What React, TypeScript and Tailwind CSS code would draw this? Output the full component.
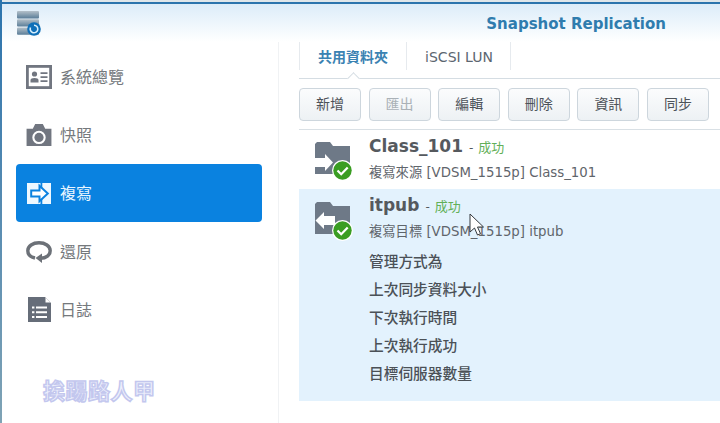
const cjk = "font-['DejaVu_Sans','Noto_Sans_CJK_TC',sans-serif]";

function OverviewIcon({ color }: { color: string }) {
  return (
    <svg width="26" height="24" viewBox="0 0 26 24" fill="none">
      <rect x="1.400" y="1.400" width="23.200" height="21.200" fill="none" stroke={color} strokeWidth="2.800" />
      <circle cx="8.500" cy="9" r="2.600" fill={color} />
      <path d="M4.500 17.500v-2.500c0-1.200 1.500-2 4-2s4 .8 4 2v2.500z" fill={color} />
      <path d="M14.500 8.200h7M14.500 12.200h7M14.500 16.200h7" stroke={color} strokeWidth="1.800" />
    </svg>
  );
}

function CameraIcon({ color }: { color: string }) {
  return (
    <svg width="26" height="22" viewBox="0 0 26 23">
      <path
        fillRule="evenodd"
        d="M0 5h6.500L9 0h8l2.500 5H26v18H0zM13 7a7 7 0 1 0 0 14 7 7 0 0 0 0-14z"
        fill={color}
      />
      <circle cx="13" cy="14" r="4.800" fill={color} />
    </svg>
  );
}

function ReplicateIcon() {
  return (
    <svg width="24" height="21" viewBox="0 0 24 21">
      <path d="M0 0h24v21H0z" fill="#eef8ff" />
      <path d="M13.500 0h1.800v5h-1.800zM13.500 16h1.800v5h-1.800z" fill="#0a82e0" />
      <path d="M4.200 7.400h8.300V2.800L20.800 10.500l-8.300 7.700v-4.600H4.200z" fill="#fff" stroke="#0a82e0" strokeWidth="2" />
    </svg>
  );
}

function RestoreIcon({ color }: { color: string }) {
  return (
    <svg width="26" height="22" viewBox="0 0 26 22" fill="none">
      <path d="M9 17C4.500 16 1.800 13.500 1.800 9.700 1.800 5 6.800 1.800 13 1.800s11.200 3.200 11.200 7.900c0 4.300-4 7.500-9.700 7.500" stroke={color} strokeWidth="3.400" />
      <path d="M16 12.500V22l-6.500-5z" fill={color} />
    </svg>
  );
}

function LogIcon({ color }: { color: string }) {
  return (
    <svg width="23" height="25" viewBox="0 0 23 25">
      <path d="M0 0h17l6 6v19H0z" fill={color} />
      <path d="M17.500 0.500l5 5h-5z" fill="#fff" />
      <path d="M4 9.500h2.400v2H4zM4 14.200h2.400v2H4zM4 18.900h2.400v2H4z" fill="#fff" />
      <path d="M8 9.500h11v2H8zM8 14.200h11v2H8zM8 18.900h11v2H8z" fill="#fff" />
    </svg>
  );
}

function AppLogo() {
  return (
    <svg width="24" height="25" viewBox="0 0 24 25">
      <defs>
        <linearGradient id="disk" x1="0" y1="0" x2="0" y2="1">
          <stop offset="0" stopColor="#b4c0c9" />
          <stop offset="1" stopColor="#5a7d98" />
        </linearGradient>
      </defs>
      <rect x="0" y="0" width="22" height="7.400" rx="1" fill="url(#disk)" />
      <rect x="0" y="8.200" width="22" height="7.400" rx="1" fill="url(#disk)" />
      <rect x="0" y="16.400" width="22" height="7.400" rx="1" fill="url(#disk)" />
      <circle cx="17" cy="18" r="6.800" fill="#0f6fb8" />
      <path d="M13.500 16.500a3.800 3.800 0 1 0 3.500-2.300" fill="none" stroke="#d7eefc" strokeWidth="1.600" />
    </svg>
  );
}

function FolderIcon({ direction, className }: { direction: "in" | "out"; className: string }) {
  return (
    <div className={`relative h-[41px] w-[40px] shrink-0 ${className}`}>
      <svg width="40" height="36" viewBox="0 0 40 36">
        <path d="M4 1h13l3 4h17v28H2V3z" fill="#6e7987" />
        {direction === "in" ? (
          <path d="M1 17h11v-4l8 8.500-8 8.500v-4H1z" fill="#fff" />
        ) : (
          <path d="M22 17H11v-4l-8.500 8.500L11 30v-4h11z" fill="#fff" transform="translate(0 -2)" />
        )}
      </svg>
      <svg className="absolute left-[19px] top-[19px]" width="21" height="21" viewBox="0 0 21 21">
        <circle cx="10.500" cy="10.500" r="10.500" fill="#fff" />
        <circle cx="10.500" cy="10.500" r="9.200" fill="#3a9d23" />
        <path d="M5.500 10.500l3.700 3.700 6.500-6.700" fill="none" stroke="#fff" strokeWidth="2.200" />
      </svg>
    </div>
  );
}

const sideItems = [
  { label: "系統總覽", icon: <OverviewIcon color="#717680" /> },
  { label: "快照", icon: <CameraIcon color="#717680" /> },
  { label: "複寫", icon: <ReplicateIcon />, active: true },
  { label: "還原", icon: <RestoreIcon color="#6c7178" /> },
  { label: "日誌", icon: <LogIcon color="#666d79" /> },
];

const toolbar = [
  { label: "新增" },
  { label: "匯出", disabled: true },
  { label: "編輯" },
  { label: "刪除" },
  { label: "資訊" },
  { label: "同步" },
];

const details = ["管理方式為", "上次同步資料大小", "下次執行時間", "上次執行成功", "目標伺服器數量"];

export default function App() {
  return (
    <div className={`relative flex h-[423px] w-[720px] flex-col overflow-hidden bg-white ${cjk}`}>
      <div className="h-[4px] shrink-0 border-t-2 border-[#dfe6ea] bg-[#2b74ad]" />
      <header className="flex h-[38px] shrink-0 items-start justify-between bg-gradient-to-b from-[#dcecf9] to-white pl-[17px] pr-[54px]">
        <div className="mt-[7px]">
          <AppLogo />
        </div>
        <h1 className="mt-[10px] text-[15px] font-bold leading-[20px] text-[#2f7cae]">Snapshot Replication</h1>
      </header>

      <div className="flex min-h-0 flex-1">
        <aside className="flex w-[279px] shrink-0 flex-col border-r border-[#f0f2f4] pl-[16px] pr-[16px] pt-[6px]">
          {sideItems.map((item) => (
            <div
              key={item.label}
              className={`mb-[0.200px] flex h-[58px] items-center rounded-[4px] pl-[10px] text-[16px] ${
                item.active ? "bg-[#0a82e0] text-[#e8f5ff]" : "text-[#75797d]"
              }`}
            >
              <span className="flex w-[34px] shrink-0">
                <span className="flex w-[26px] justify-center">{item.icon}</span>
              </span>
              <span className="pt-[2px]">{item.label}</span>
            </div>
          ))}
          <div className="mt-[39px] pl-[27px] text-[22px] font-bold leading-[28px] tracking-[0.500px] text-[#eef0fc] [-webkit-text-stroke:1.500px_#c3c7ee]">
            挨踢路人甲
          </div>
        </aside>

        <main className="flex min-w-0 flex-1 flex-col pl-[20px]">
          <nav className="relative flex h-[37px] shrink-0 border-b border-[#d5dde3]">
            <div className="mb-[8px] flex w-[108px] items-center justify-center border-x border-[#e6eaee] pt-[2px] text-[14px] font-bold text-[#3a82b2]">
              共用資料夾
            </div>
            <div className="mb-[8px] flex w-[104px] items-center justify-center border-r border-[#e6eaee] pl-[1px] pt-[2px] text-[14px] text-[#5c6670]">
              iSCSI LUN
            </div>
            <span className="absolute bottom-[-5px] left-[50px] h-[9px] w-[9px] rotate-45 border-l border-t border-[#d5dde3] bg-white" />
          </nav>

          <div className="flex h-[51px] shrink-0 items-center gap-[7.600px] border-b border-[#d9e0e5]">
            {toolbar.map((btn) => (
              <button
                key={btn.label}
                className={`h-[33px] w-[62px] rounded-[4px] border border-[#cdd6dd] bg-gradient-to-b from-[#fbfcfd] to-[#edf1f4] text-[14px] ${
                  btn.disabled ? "text-[#aab1b7]" : "text-[#4d5359]"
                }`}
              >
                {btn.label}
              </button>
            ))}
          </div>

          <div className="flex h-[59px] shrink-0 items-start pl-[14px]">
            <FolderIcon direction="in" className="mt-[11px]" />
            <div className="ml-[16px] mt-[5px]">
              <div className="flex items-baseline text-[#55595e]">
                <span className="text-[17px] font-bold leading-[22px]">Class_101</span>
                <span className="ml-[6px] text-[12px]">-</span>
                <span className="ml-[5px] text-[13px] text-[#62b058]">成功</span>
              </div>
              <p className="mt-[6px] text-[13.300px] leading-[18px] text-[#5f656b]">複寫來源 [VDSM_1515p] Class_101</p>
            </div>
          </div>

          <div className="flex h-[212px] shrink-0 items-start bg-[#e3f2fd] pl-[14px]">
            <FolderIcon direction="out" className="mt-[12px]" />
            <div className="ml-[16px] mt-[5px]">
              <div className="flex items-baseline text-[#55595e]">
                <span className="text-[17px] font-bold leading-[22px]">itpub</span>
                <span className="ml-[6px] text-[12px]">-</span>
                <span className="ml-[5px] text-[13px] text-[#62b058]">成功</span>
              </div>
              <p className="mt-[6px] text-[13.300px] leading-[18px] text-[#5f656b]">複寫目標 [VDSM_1515p] itpub</p>
              <ul className="mt-[7px]">
                {details.map((line) => (
                  <li key={line} className="h-[28px] text-[14.700px] font-medium leading-[28px] text-[#4b5157]">
                    {line}
                  </li>
                ))}
              </ul>
            </div>
          </div>
        </main>
      </div>

      {/* left edge of the desktop behind the window, and the mouse pointer caught in the capture */}
      <div className="absolute bottom-0 left-0 top-0 w-[1.500px] bg-gradient-to-b from-[#2b74ad] to-[#7fa3b5]" />
      <svg className="absolute left-[469px] top-[213px]" width="16" height="24" viewBox="0 0 16 24">
        <path d="M1 1v18l4.500-4 3 7 3-1.300-3-6.700h6z" fill="#fff" stroke="#33383d" strokeWidth="1" />
      </svg>
    </div>
  );
}
